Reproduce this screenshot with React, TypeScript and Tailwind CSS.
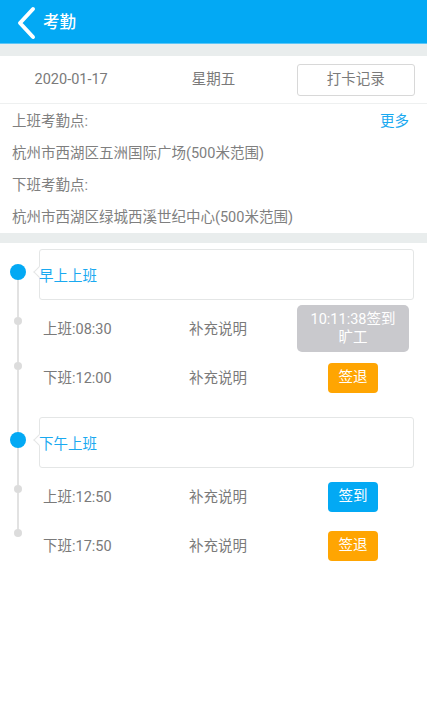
import React from "react";

const font = { fontFamily: 'Roboto, "Noto Sans CJK SC", sans-serif' };

function Card({ title }: { title: string }) {
  return (
    <div className="flex items-center h-[51px]">
      <div className="w-[36px] flex justify-center self-start pt-[15px]">
        <div className="w-[16px] h-[16px] rounded-full bg-[#03a9f4] relative z-10" />
      </div>
      <div className="relative ml-[3px] mr-[13px] flex-1 h-full border border-[#e4e6e6] rounded-[3px] bg-white flex items-center">
        <div className="absolute left-[-5px] top-[18px] w-[8px] h-[8px] rotate-45 bg-white border-l border-b border-[#e4e6e6]" />
        <span className="relative text-[14.5px] text-[#1aa9f0] pt-[5px] -ml-[1px]">{title}</span>
      </div>
    </div>
  );
}

function Row({
  label,
  dotTop,
  button,
}: {
  label: string;
  dotTop: string;
  button: React.ReactNode;
}) {
  return (
    <div className="relative flex items-center h-[49px] pl-[43px] pr-[18px] text-[14.5px] text-[#7a7a7a]">
      <div className={`absolute left-[14px] ${dotTop} w-[8px] h-[8px] rounded-full bg-[#dcdcdc] z-10`} />
      <div className="w-[146px] pt-[3px]">{label}</div>
      <div className="flex-1 pt-[3px]">补充说明</div>
      <div className="w-[112px] flex justify-center">{button}</div>
    </div>
  );
}

function SmallBtn({ text, color }: { text: string; color: string }) {
  return (
    <div className={`w-[50px] h-[30px] rounded-[4px] ${color} text-white text-[14.5px] flex items-center justify-center`}>
      {text}
    </div>
  );
}

export default function App() {
  return (
    <div className="w-[427px] h-[728px] bg-white overflow-hidden" style={font}>
      <div className="h-[44px] bg-[#03a9f4] border-b border-[#5cc6f7] flex items-center">
        <svg width="40" height="44" viewBox="0 0 40 44" className="ml-[4px]">
          <path d="M29 9 L16 23 L29 37" fill="none" stroke="white" strokeWidth="4" strokeLinecap="round" strokeLinejoin="round" />
        </svg>
        <span className="text-white text-[16.5px] font-medium -ml-[1px] pt-[3px]">考勤</span>
      </div>
      <div className="h-[12px] bg-[#e9eded]" />
      <div className="h-[48px] grid grid-cols-3 items-center border-b border-[#eef0f0] text-[14.5px] text-[#7a7a7a]">
        <div className="text-center">2020-01-17</div>
        <div className="text-center">星期五</div>
        <div className="flex justify-center">
          <div className="w-[118px] h-[32px] border border-[#d8d8d8] rounded-[3px] flex items-center justify-center">
            打卡记录
          </div>
        </div>
      </div>
      <div className="pt-[2px] px-[12px] text-[14.5px] text-[#7f7f7f]">
        <div className="h-[32px] flex items-center justify-between">
          <span>上班考勤点:</span>
          <span className="text-[#1aa9f0] mr-[6px]">更多</span>
        </div>
        <div className="h-[32px] flex items-center">杭州市西湖区五洲国际广场(500米范围)</div>
        <div className="h-[32px] flex items-center">下班考勤点:</div>
        <div className="h-[31px] flex items-center">杭州市西湖区绿城西溪世纪中心(500米范围)</div>
      </div>
      <div className="h-[10px] bg-[#e9eded]" />
      <div className="relative pt-[6px]">
        <div className="absolute left-[17px] top-[29px] h-[261px] w-[2px] bg-[#e2e2e2]" />
        <Card title="早上上班" />
        <div className="h-[4px]" />
        <Row
          label="上班:08:30"
          dotTop="top-[13px]"
          button={
            <div className="w-[112px] h-[47px] rounded-[5px] bg-[#c9c9cd] text-white text-[14.5px] leading-[18px] flex flex-col items-center justify-center">
              <span>10:11:38签到</span>
              <span>旷工</span>
            </div>
          }
        />
        <Row label="下班:12:00" dotTop="top-[9px]" button={<SmallBtn text="签退" color="bg-[#ffa502]" />} />
        <div className="h-[15px]" />
        <Card title="下午上班" />
        <div className="h-[4px]" />
        <Row label="上班:12:50" dotTop="top-[13px]" button={<SmallBtn text="签到" color="bg-[#03a9f4]" />} />
        <Row label="下班:17:50" dotTop="top-[8px]" button={<SmallBtn text="签退" color="bg-[#ffa502]" />} />
      </div>
    </div>
  );
}
